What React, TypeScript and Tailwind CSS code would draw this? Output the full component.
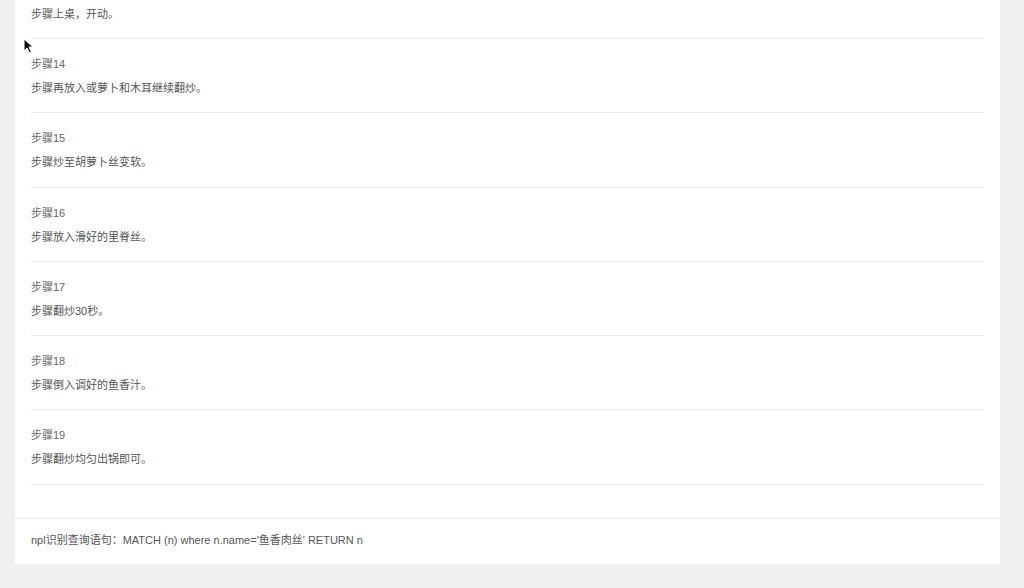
const STEPS = [
    { no: 14, text: '步骤再放入或萝卜和木耳继续翻炒。' },
    { no: 15, text: '步骤炒至胡萝卜丝变软。' },
    { no: 16, text: '步骤放入滑好的里脊丝。' },
    { no: 17, text: '步骤翻炒30秒。' },
    { no: 18, text: '步骤倒入调好的鱼香汁。' },
    { no: 19, text: '步骤翻炒均匀出锅即可。' },
];

function Cursor() {
    return (
        <svg className="absolute left-[23px] top-[38px]" width="12" height="16" viewBox="0 0 12 16">
            <path d="M1 1 L1 13 L4 10 L6.5 15 L8.5 14 L6 9 L10 9 Z" fill="#111" stroke="#fff" strokeWidth="1" />
        </svg>
    );
}

export default function App() {
    return (
        <div className="relative min-h-[588px] bg-[#f0f0f2] font-['Liberation_Sans','Noto_Sans_CJK_SC',sans-serif] text-[11px]">
            <div className="ml-[15px] w-[985px] bg-white">
                {/* step list */}
                <div className="px-4 pb-[33px]">
                    <div className="pt-[2px] pb-[12px] border-b border-[#ebebeb]">
                        <p className="leading-[24px] text-[#555]">步骤上桌，开动。</p>
                    </div>
                    {STEPS.map(s => (
                        <div key={s.no} className="pt-[13px] pb-[12.3px] border-b border-[#ebebeb]">
                            <p className="leading-[24px] text-[#666]">步骤{s.no}</p>
                            <p className="leading-[24px] text-[#555]">{s.text}</p>
                        </div>
                    ))}
                </div>

                {/* footer */}
                <div className="h-[46px] border-t border-[#ebebeb] px-4 pb-[2px] flex items-center">
                    <p className="text-[#555] leading-[20px]">npl识别查询语句：MATCH (n) where n.name='鱼香肉丝' RETURN n</p>
                </div>
            </div>
            <Cursor />
        </div>
    );
}
